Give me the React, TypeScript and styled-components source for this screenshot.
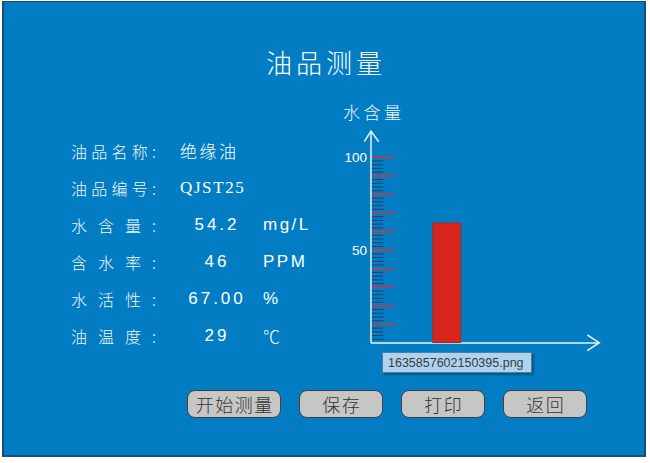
import React from "react";
import styled, { createGlobalStyle } from "styled-components";

const Global = createGlobalStyle`
  html, body { margin: 0; padding: 0; background: #ffffff; }
  #root { width: 650px; height: 463px; }
`;

const CJK = `"Noto Sans CJK SC", "Noto Sans", sans-serif`;
const LATIN = `"Liberation Sans", "Noto Sans CJK SC", sans-serif`;
const SERIF = `"Liberation Serif", "Noto Sans CJK SC", serif`;

const Panel = styled.div`
  box-sizing: border-box;
  width: 644px;
  height: 456px;
  margin: 1px 0 0 2px;
  background: #027dc3;
  border: 2px solid #1b4c74;
  border-top-width: 1px;
  padding-top: 45px;
  display: flex;
  flex-direction: column;
`;

const Title = styled.h1`
  margin: 0;
  height: 30px;
  line-height: 30px;
  text-align: center;
  font-family: ${CJK};
  font-weight: 300;
  font-size: 26px;
  letter-spacing: 4px;
  padding-left: 4px;
  color: #ffffff;
`;

const Body = styled.div`
  display: flex;
  margin-top: 18px;
  height: 295px;
`;

const InfoList = styled.div`
  margin-left: 67px;
  padding-top: 37px;
  width: 269px;
  display: flex;
  flex-direction: column;
`;

const Row = styled.div`
  display: flex;
  align-items: center;
  height: 37px;
  color: #ffffff;
`;

const Label = styled.div`
  width: 85px;
  display: flex;
  justify-content: space-between;
  font-family: ${CJK};
  font-weight: 300;
  font-size: 16px;
  color: #f2f6fa;
`;

type Face = "latin" | "serif" | "cjk";

const Value = styled.div<{ $align: "left" | "center"; $face: Face }>`
  margin-left: 23px;
  width: 73px;
  box-sizing: border-box;
  text-align: ${(p) => p.$align};
  padding-left: ${(p) => (p.$align === "center" ? "3px" : "1px")};
  white-space: nowrap;
  font-family: ${(p) => (p.$face === "serif" ? SERIF : p.$face === "cjk" ? CJK : LATIN)};
  font-weight: ${(p) => (p.$face === "cjk" ? 300 : 400)};
  font-size: 17px;
  letter-spacing: ${(p) => (p.$face === "serif" ? "1.6px" : p.$face === "cjk" ? "2.5px" : "3px")};
`;

const Unit = styled.div<{ $cjk?: boolean }>`
  margin-left: 11px;
  white-space: nowrap;
  font-family: ${(p) => (p.$cjk ? CJK : LATIN)};
  font-weight: ${(p) => (p.$cjk ? 300 : 400)};
  font-size: 17px;
  letter-spacing: 2.5px;
`;

const ChartColumn = styled.div`
  position: relative;
  padding-top: 7px;
  display: flex;
  flex-direction: column;
`;

const ChartTitle = styled.div`
  margin-left: 3px;
  height: 20px;
  line-height: 20px;
  font-family: ${CJK};
  font-weight: 300;
  font-size: 17px;
  letter-spacing: 3.5px;
  color: #f2f6fa;
`;

const ChartSvg = styled.svg`
  display: block;
`;

const Tip = styled.div`
  position: absolute;
  left: 42px;
  top: 257px;
  width: 150px;
  height: 21px;
  box-sizing: border-box;
  background: #acd3ef;
  border: 1px solid #5d7a93;
  box-shadow: 2px 2px 2px rgba(0, 0, 0, 0.3);
  display: flex;
  align-items: center;
  padding-left: 5px;
  font-family: ${LATIN};
  font-size: 12.5px;
  color: #3b3b3b;
`;

const ButtonRow = styled.div`
  display: flex;
  gap: 18px;
  padding-left: 183px;
`;

const Button = styled.button<{ $w: number }>`
  box-sizing: border-box;
  width: ${(p) => p.$w}px;
  height: 28px;
  padding: 0 0 0 1.5px;
  margin: 0;
  background: #c6c6c6;
  border: 1px solid #404040;
  border-radius: 8px;
  display: flex;
  align-items: center;
  justify-content: center;
  font-family: ${CJK};
  font-weight: 300;
  font-size: 18px;
  letter-spacing: 1.5px;
  color: #333333;
`;

const SpacedLabel: React.FC<{ text: string }> = ({ text }) => (
  <Label>
    {Array.from(text).map((c, i) => (
      <span key={i}>{c}</span>
    ))}
  </Label>
);

type Info = {
  label: string;
  value: string;
  align: "left" | "center";
  face: Face;
  unit?: string;
  unitCjk?: boolean;
};

const rows: Info[] = [
  { label: "油品名称:", value: "绝缘油", align: "left", face: "cjk" },
  { label: "油品编号:", value: "QJST25", align: "left", face: "serif" },
  { label: "水含量:", value: "54.2", align: "center", face: "latin", unit: "mg/L" },
  { label: "含水率:", value: "46", align: "center", face: "latin", unit: "PPM" },
  { label: "水活性:", value: "67.00", align: "center", face: "latin", unit: "%" },
  { label: "油温度:", value: "29", align: "center", face: "latin", unit: "℃", unitCjk: true },
];

const AXIS_X = 31;
const AXIS_Y = 221;
const PER_UNIT = 1.857;

const Chart: React.FC = () => {
  const majors: number[] = [];
  const minors: number[] = [];
  for (let v = 2; v <= 100; v += 2) {
    if (v % 10 === 0) majors.push(v);
    else minors.push(v);
  }
  const y = (v: number) => AXIS_Y - v * PER_UNIT;
  return (
    <ChartSvg width={266} height={232} viewBox="0 0 266 232">
      {minors.map((v) => (
        <line
          key={"m" + v}
          x1={AXIS_X}
          x2={43.3}
          y1={y(v)}
          y2={y(v)}
          stroke="#1c3f68"
          strokeWidth={1}
        />
      ))}
      {majors.map((v) => (
        <line
          key={"M" + v}
          x1={AXIS_X}
          x2={54.3}
          y1={y(v)}
          y2={y(v)}
          stroke="#d6343a"
          strokeWidth={1.5}
        />
      ))}
      <line x1={AXIS_X} y1={9} x2={AXIS_X} y2={AXIS_Y} stroke="#eaf2fa" strokeWidth={1.5} />
      <polyline points="24.3,19.7 31,9 38.7,19.7" fill="none" stroke="#eaf2fa" strokeWidth={1.5} />
      <line x1={AXIS_X} y1={AXIS_Y} x2={259} y2={AXIS_Y} stroke="#eaf2fa" strokeWidth={1.5} />
      <polyline points="247.3,213 259.3,220.7 247.3,228.7" fill="none" stroke="#eaf2fa" strokeWidth={1.5} />
      <text x={27} y={y(100) + 4.8} textAnchor="end" fontFamily="Liberation Sans" fontSize={13.5} fill="#ffffff">
        100
      </text>
      <text x={27} y={y(50) + 4.8} textAnchor="end" fontFamily="Liberation Sans" fontSize={13.5} fill="#ffffff">
        50
      </text>
      <rect x={92.8} y={101} width={28} height={119.5} fill="#d9261c" stroke="#8f3434" strokeWidth={1} />
    </ChartSvg>
  );
};

export default function App() {
  return (
    <>
      <Global />
      <Panel>
        <Title>油品测量</Title>
        <Body>
          <InfoList>
            {rows.map((r) => (
              <Row key={r.label}>
                <SpacedLabel text={r.label} />
                <Value $align={r.align} $face={r.face}>
                  {r.value}
                </Value>
                {r.unit && <Unit $cjk={r.unitCjk}>{r.unit}</Unit>}
              </Row>
            ))}
          </InfoList>
          <ChartColumn>
            <ChartTitle>水含量</ChartTitle>
            <Chart />
            <Tip>1635857602150395.png</Tip>
          </ChartColumn>
        </Body>
        <ButtonRow>
          <Button $w={94}>开始测量</Button>
          <Button $w={84}>保存</Button>
          <Button $w={84}>打印</Button>
          <Button $w={84}>返回</Button>
        </ButtonRow>
      </Panel>
    </>
  );
}
